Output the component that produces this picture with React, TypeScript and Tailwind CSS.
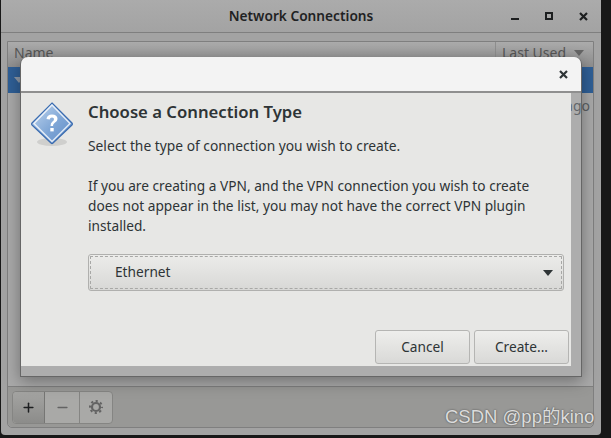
import { Minus, Plus } from "lucide-react";

const font = { fontFamily: '"Noto Sans", "Noto Sans CJK SC", sans-serif' };

function CloseIcon() {
  return (
    <svg width="9" height="9" viewBox="0 0 9 9" className="shrink-0">
      <path d="M1 1l7 7M8 1L1 8" stroke="currentColor" strokeWidth="2.2" fill="none" />
    </svg>
  );
}

function GearIcon() {
  return (
    <svg width="14" height="14" viewBox="0 0 14 14">
      <circle cx="7" cy="7" r="4" fill="none" stroke="#636363" strokeWidth="2.2" />
      <circle cx="7" cy="7" r="6" fill="none" stroke="#636363" strokeWidth="2" strokeDasharray="2.2 2.51" strokeDashoffset="1.1" />
    </svg>
  );
}

function QuestionIcon() {
  return (
    <svg width="46" height="46" viewBox="0 0 46 46" className="shrink-0">
      <defs>
        <linearGradient id="q" x1="0" y1="0" x2="1" y2="1">
          <stop offset="0" stopColor="#c5d9ef" />
          <stop offset="0.55" stopColor="#7fa6d6" />
          <stop offset="1" stopColor="#5d8ac6" />
        </linearGradient>
      </defs>
      <ellipse cx="23" cy="41" rx="15" ry="4" fill="#000" opacity="0.1" />
      <path d="M23 2 L43 22 Q44 23 43 24 L24 42 Q23 43 22 42 L3 24 Q2 23 3 22 Z" fill="url(#q)" stroke="#3b6cb0" strokeWidth="1.2" />
      <path d="M23 4 L41 22.5 L23 40.5 L5 22.5 Z" fill="none" stroke="#fff" strokeOpacity="0.8" strokeWidth="1.4" />
      <path d="M17.5 18 Q18 13.5 23 13.5 Q28.5 13.5 28.5 18 Q28.5 20.5 25.5 22 Q24 23 24 25 L21.5 25 Q21.5 21.5 23.5 20.5 Q25 19.5 25 18 Q25 16.5 23 16.5 Q21 16.5 20.7 18.5 Z" fill="#fff" />
      <rect x="21.3" y="27" width="3.4" height="3.4" fill="#fff" />
    </svg>
  );
}

function DialogButton({ label }: { label: string }) {
  return (
    <button className="h-[34px] w-[95px] rounded-[3px] border border-[#b5b5b3] bg-gradient-to-b from-[#eeeeec] to-[#d9d9d7] text-[13.7px] text-[#2e3436]">
      {label}
    </button>
  );
}

export default function App() {
  return (
    <div className="relative h-[438px] w-[611px] overflow-hidden bg-[#181818]" style={font}>
      <div className="ml-px flex h-[435px] w-[600px] flex-col rounded-b-[4px] bg-[#a3a3a3]">
        <header className="relative flex h-[33px] shrink-0 items-center justify-center border-b border-[#7f7f7f] bg-gradient-to-b from-[#ababab] to-[#a3a3a3]">
          <span className="text-[13.7px] font-semibold text-[#1f2223]">Network Connections</span>
          <div className="absolute right-[13px] top-[12px] flex items-start gap-[26px] text-[#1d1f20]">
            <span className="mt-[6px] h-[2px] w-[8px] bg-[#1d1f20]" />
            <span className="h-[8px] w-[8px] border-2 border-[#1d1f20]" />
            <CloseIcon />
          </div>
        </header>
        <div className="mb-[7px] ml-[6px] mt-[8px] flex w-[587px] flex-1 flex-col rounded-b-[5px] border border-[#7f7f7f]">
          <div className="flex h-[25px] shrink-0 bg-gradient-to-b from-[#ababab] to-[#8e8e8e]">
            <span className="flex-1 pl-[6px] text-[14px] text-[#565656]">Name</span>
            <span className="flex w-[98px] gap-[8px] border-l border-[#8e8e8e] pl-[6px] text-[14px] text-[#565656]">
              Last Used
              <svg width="10" height="6" viewBox="0 0 10 6" className="mt-[8px]">
                <path d="M0 0h10L5 6z" fill="#656565" />
              </svg>
            </span>
          </div>
          <div className="flex h-[26px] shrink-0 items-center bg-[#2f5f96] pl-[6px]">
            <svg width="10" height="6" viewBox="0 0 10 6">
              <path d="M0 0h10L5 6z" fill="#8f9aa8" />
            </svg>
          </div>
          <div className="flex-1 bg-[#a9a9a9] pr-[3px] pt-[3px] text-right text-[14px] leading-[20px] text-[#5a5f63]">ago</div>
          <div className="flex h-[41px] shrink-0 items-center rounded-b-[5px] border-t border-[#7f7f7f] bg-[#989896] pl-[4px]">
            <div className="flex h-[33px] w-[101px] rounded-[4px] border border-[#858583] bg-[#a9a9a7]">
              <span className="flex w-[32px] items-center justify-center rounded-l-[4px] border-r border-[#767674] bg-gradient-to-b from-[#a4a4a2] to-[#8c8c8a] text-[#1d1f20]">
                <Plus size={15} strokeWidth={2.4} />
              </span>
              <span className="flex w-[35px] items-center justify-center border-r border-[#858583] text-[#636363]">
                <Minus size={15} strokeWidth={2.4} />
              </span>
              <span className="flex flex-1 items-center justify-center">
                <GearIcon />
              </span>
            </div>
          </div>
        </div>
      </div>

      <section className="absolute left-[20px] top-[57px] h-[320px] w-[562px] rounded-t-[7px] border-b border-l border-r border-[#666] bg-white/5 shadow-[0_4px_16px_rgba(0,0,0,0.35)]">
        <div className="flex h-[36px] items-center justify-end rounded-t-[7px] border-b-2 border-[#8f8f8f] bg-[#f3f3f3] pr-[13px] text-[#2e3436]">
          <CloseIcon />
        </div>
        <div className="flex h-[273px] w-[550px] flex-col bg-[#e7e7e5] pb-[2px] pl-[8px] pr-[2px] pt-[8px] text-[#2e3436]">
          <div className="flex gap-[13px]">
            <QuestionIcon />
            <div className="flex-1">
              <h1 className="text-[16.7px] font-semibold leading-[22px]">Choose a Connection Type</h1>
              <p className="mt-[13px] text-[13.8px] leading-[20px]">Select the type of connection you wish to create.</p>
              <p className="mt-[20px] w-[460px] text-[13.7px] leading-[20px]">
                If you are creating a VPN, and the VPN connection you wish to create does not appear in the list, you may not have the correct VPN plugin installed.
              </p>
              <div className="mt-[18px] flex h-[37px] w-[476px] items-center justify-between rounded-[3px] border border-[#b0b0ae] bg-gradient-to-b from-[#ececea] to-[#d8d8d6] pl-[26px] pr-[10px] text-[13.7px] outline-1 -outline-offset-3 outline-dashed outline-[#a8a8a6]">
                Ethernet
                <svg width="10" height="6" viewBox="0 0 10 6">
                  <path d="M0 0h10L5 6z" fill="#2e3436" />
                </svg>
              </div>
            </div>
          </div>
          <div className="mt-auto flex justify-end gap-[4px]">
            <DialogButton label="Cancel" />
            <DialogButton label="Create..." />
          </div>
        </div>
      </section>

      <span
        className="absolute left-[445px] top-[405px] text-[18.5px] leading-[24px] text-[#dcdcdc] [text-shadow:0_0_2px_#444]"
        style={{ fontFamily: '"Liberation Sans", "Noto Sans CJK SC", sans-serif' }}
      >
        CSDN @pp的kino
      </span>
    </div>
  );
}
